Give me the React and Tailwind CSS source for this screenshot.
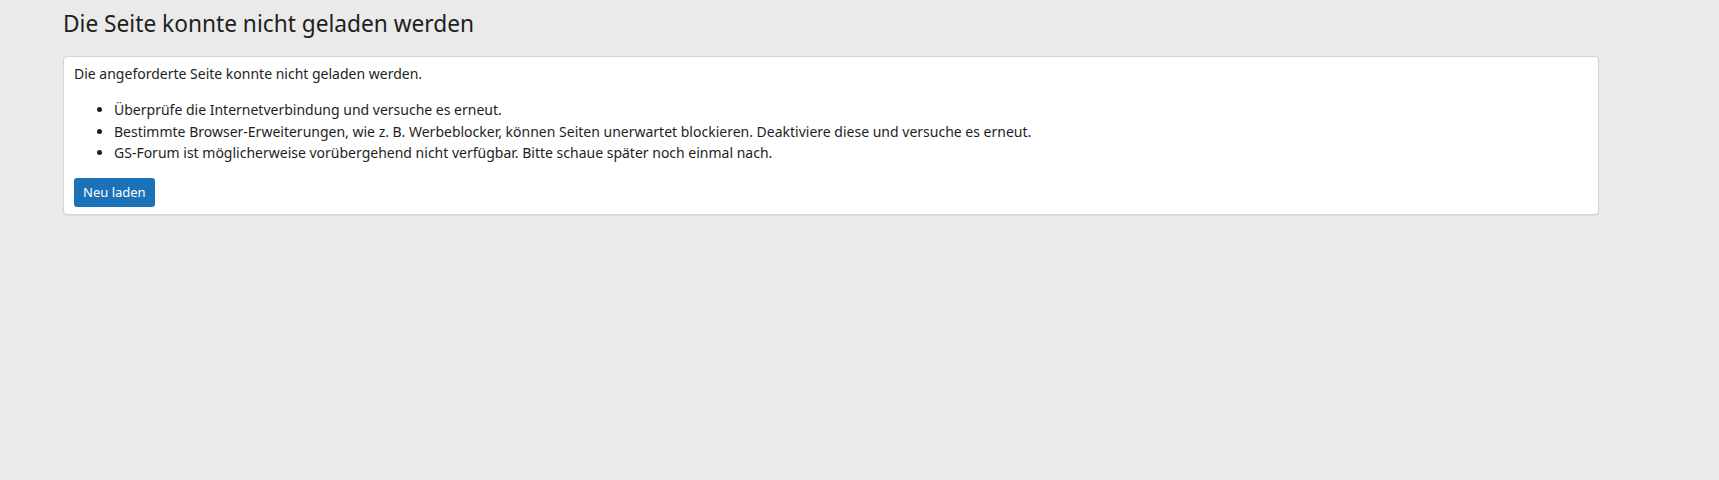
import React from "react";

const App = () => {
  const hints = [
    "Überprüfe die Internetverbindung und versuche es erneut.",
    "Bestimmte Browser-Erweiterungen, wie z. B. Werbeblocker, können Seiten unerwartet blockieren. Deaktiviere diese und versuche es erneut.",
    "GS-Forum ist möglicherweise vorübergehend nicht verfügbar. Bitte schaue später noch einmal nach.",
  ];

  return (
    <div
      className="min-h-[480px] bg-[#eaeaea] text-[#1e1e1e]"
      style={{ fontFamily: '"Noto Sans", "Open Sans", sans-serif' }}
    >
      <div className="ml-[63px] w-[1536px] pt-[8px]">
        <h1 className="text-[22.7px] leading-[32px] font-normal mb-[16px]">
          Die Seite konnte nicht geladen werden
        </h1>

        {/* error card */}
        <div className="bg-white border border-[#d4d4d4] rounded-[4px] px-[10px] pt-[6px] pb-[7px] shadow-[0_1px_1px_rgba(0,0,0,0.06)]">
          <p className="text-[14px] leading-[21px]">
            Die angeforderte Seite konnte nicht geladen werden.
          </p>
          <ul className="list-disc pl-[40px] mt-[15px] mb-[14px] text-[14px] leading-[21.5px]">
            {hints.map((h) => (
              <li key={h}>{h}</li>
            ))}
          </ul>
          <button className="h-[29px] px-[9px] rounded-[3px] bg-[#1b72b9] text-white text-[13px] leading-none">
            Neu laden
          </button>
        </div>
      </div>
    </div>
  );
};

export default App;
